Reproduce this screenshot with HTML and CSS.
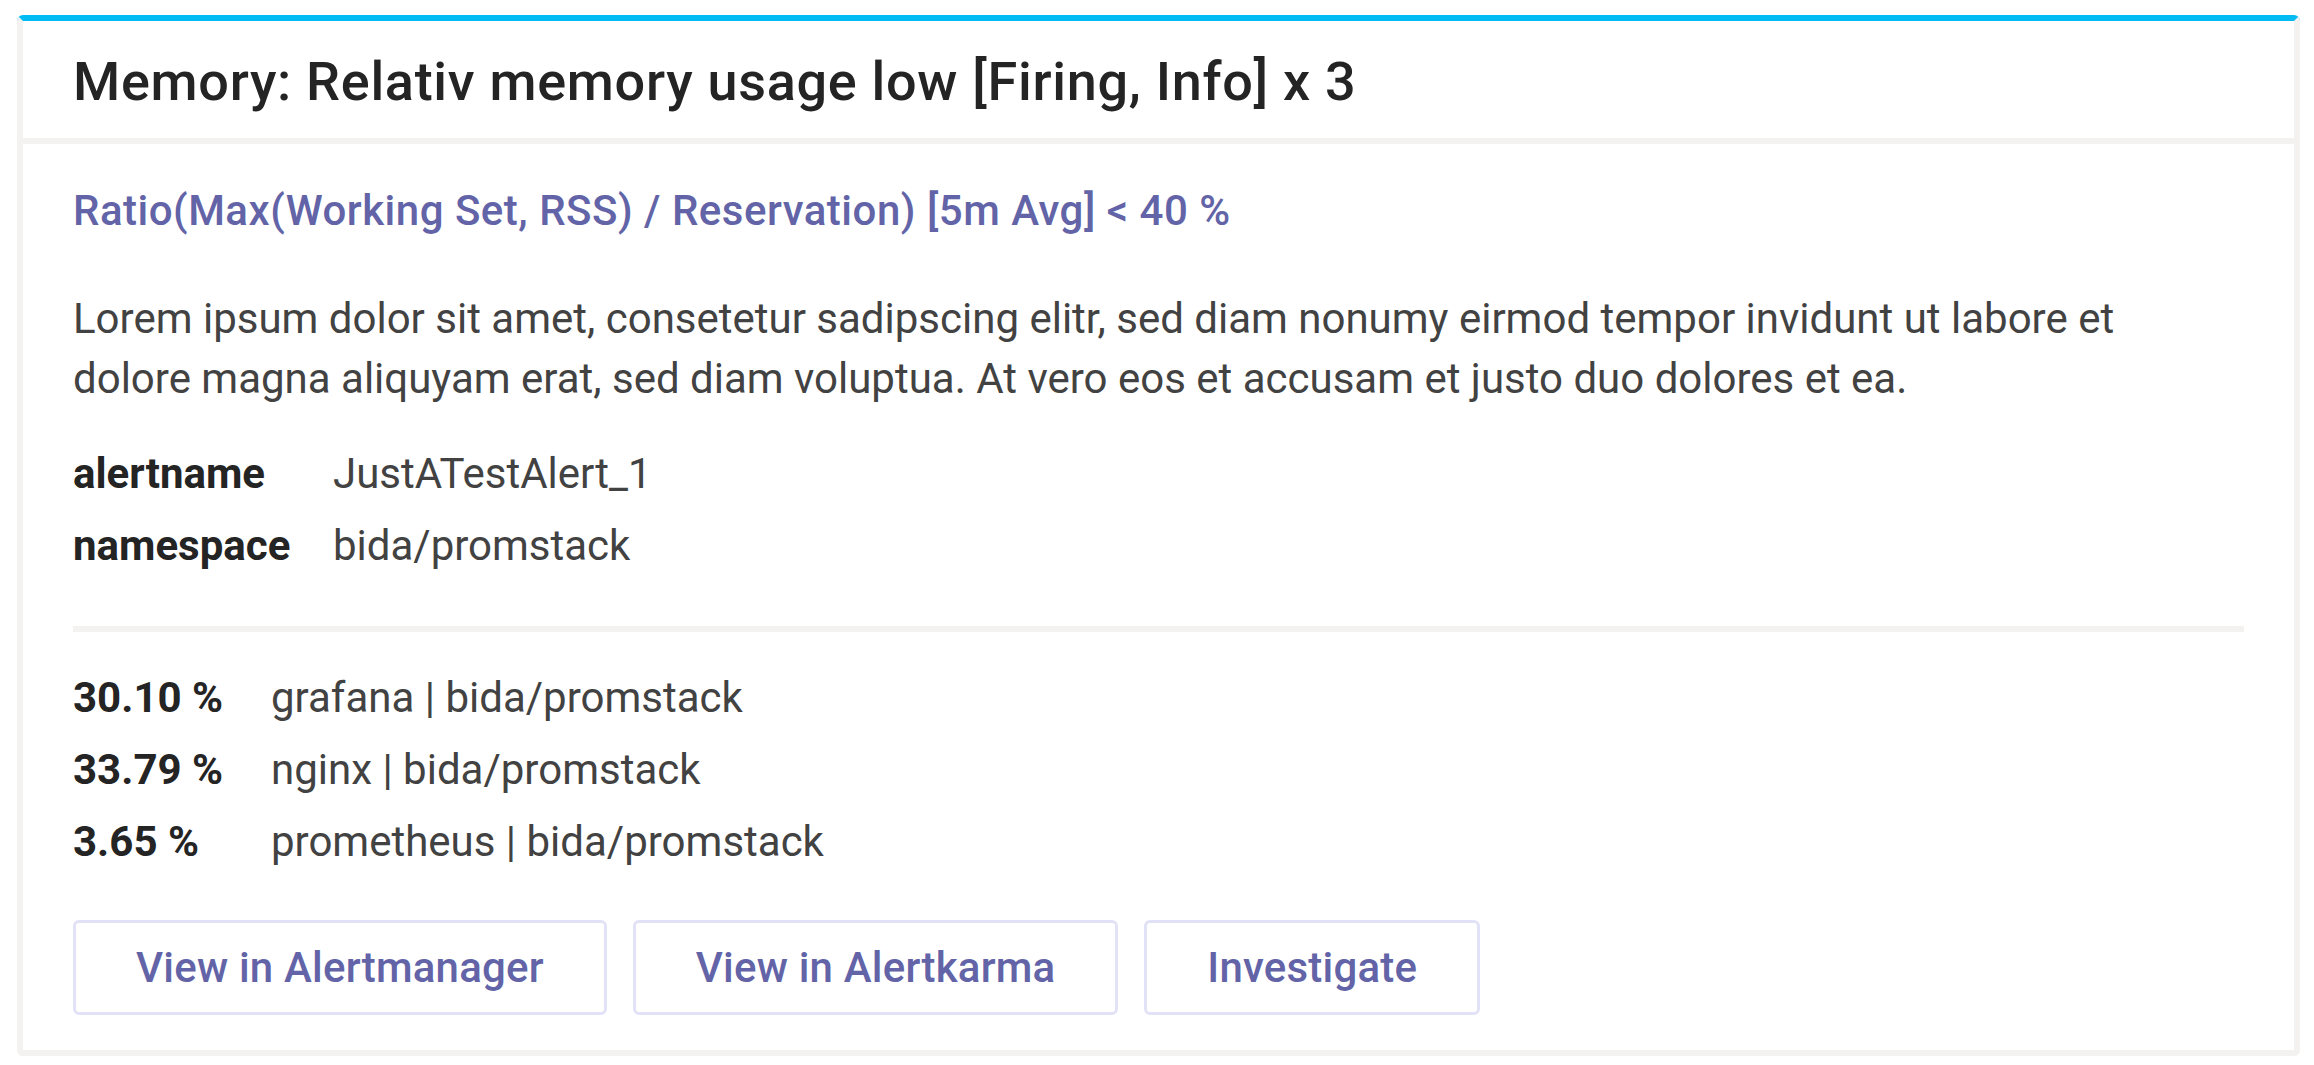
FILE: index.html
```html
<!DOCTYPE html>
<html lang="en">
<head>
<meta charset="utf-8">
<title>Alert card</title>
<link rel="stylesheet" href="styles.css">
</head>
<body>
<div class="card">
  <div class="card-header">
    <h1 class="title">Memory: Relativ memory usage low [Firing, Info] x 3</h1>
  </div>
  <div class="card-body">
    <p class="condition">Ratio(Max(Working Set, RSS) / Reservation) [5m Avg] &lt; 40 %</p>
    <p class="description">Lorem ipsum dolor sit amet, consetetur sadipscing elitr, sed diam nonumy eirmod tempor invidunt ut labore et<br>dolore magna aliquyam erat, sed diam voluptua. At vero eos et accusam et justo duo dolores et ea.</p>
    <dl class="facts">
      <dt>alertname</dt><dd>JustATestAlert_1</dd>
      <dt>namespace</dt><dd>bida/promstack</dd>
    </dl>
    <hr class="divider">
    <div class="series">
      <span class="val">30.10 %</span><span class="name">grafana | bida/promstack</span>
      <span class="val">33.79 %</span><span class="name">nginx | bida/promstack</span>
      <span class="val">3.65 %</span><span class="name">prometheus | bida/promstack</span>
    </div>
    <div class="actions">
      <button class="btn">View in Alertmanager</button>
      <button class="btn">View in Alertkarma</button>
      <button class="btn">Investigate</button>
    </div>
  </div>
</div>
</body>
</html>
```
FILE: styles.css
```css
* { box-sizing: border-box; }
body {
  margin: 0;
  padding: 15px 14px 0 17px;
  background: #ffffff;
  font-family: Roboto, "Noto Sans", sans-serif;
  color: #424242;
}
.card {
  background: #ffffff;
  border: 6px solid #f3f2f1;
  border-top-color: #00bcf2;
  border-radius: 6px;
}
.card-header {
  padding: 25px 50px 20px;
  border-bottom: 6px solid #f3f2f1;
}
.title {
  margin: 0;
  font-size: 54px;
  line-height: 72px;
  font-weight: 500;
  letter-spacing: 0.7px;
  color: #242424;
}
.card-body {
  padding: 37px 50px 35px;
}
.condition {
  margin: 0;
  font-size: 42px;
  line-height: 60px;
  font-weight: 500;
  letter-spacing: 0.5px;
  color: #6264a7;
}
.description {
  margin: 48px 0 0;
  font-size: 42px;
  line-height: 60px;
}
.facts {
  margin: 35px 0 0;
  display: grid;
  grid-template-columns: 260px 1fr;
  row-gap: 12px;
  font-size: 42px;
  line-height: 60px;
}
.facts dt { font-weight: 700; color: #242424; }
.facts dd { margin: 0; }
.divider {
  margin: 50px 0 0;
  border: 0;
  height: 6px;
  background: #f3f2f1;
}
.series {
  margin-top: 36px;
  display: grid;
  grid-template-columns: 198px 1fr;
  row-gap: 12px;
  font-size: 42px;
  line-height: 60px;
}
.series .val { font-weight: 700; color: #242424; }
.actions {
  margin-top: 48px;
  display: flex;
  gap: 26px;
}
.btn {
  height: 95px;
  padding: 0 60px;
  border: 3px solid #e2e2f6;
  border-radius: 6px;
  background: #ffffff;
  color: #6264a7;
  font-family: inherit;
  font-size: 42px;
  font-weight: 500;
  letter-spacing: 0.2px;
}
```
